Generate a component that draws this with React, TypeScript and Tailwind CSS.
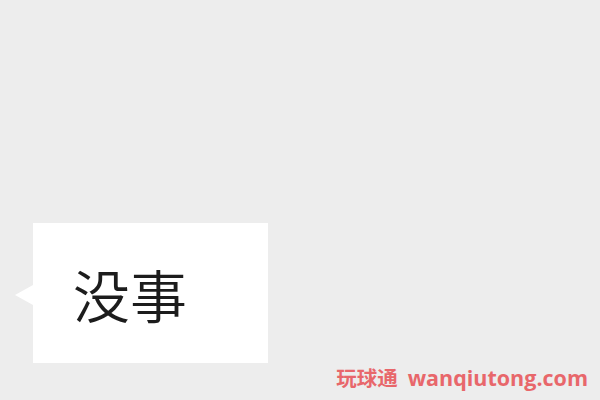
export default function App() {
  return (
    <div className="relative h-[400px] w-[600px] overflow-hidden bg-[#ededed]">
      <div className="pl-[33px] pt-[223px]">
        <div className="relative flex h-[140px] w-[235px] items-center bg-white pl-[40px]">
          <div className="absolute left-[-18px] top-[62px] h-0 w-0 border-y-[10px] border-r-[18px] border-y-transparent border-r-white" />
          <span
            className="text-[57px] font-[350] leading-none text-[#1c1c1c]"
            style={{ fontFamily: '"Noto Sans CJK SC", "Noto Sans", sans-serif' }}
          >
            没事
          </span>
        </div>
      </div>
      <div
        className="absolute bottom-[6px] right-[12px] flex items-baseline gap-[10px] text-[20.5px] font-bold text-[#e8676b]"
        style={{ fontFamily: '"Noto Sans CJK SC", "Noto Sans", sans-serif' }}
      >
        <span>玩球通</span>
        <span className="font-['Open_Sans'] text-[21.5px]">wanqiutong.com</span>
      </div>
    </div>
  );
}
